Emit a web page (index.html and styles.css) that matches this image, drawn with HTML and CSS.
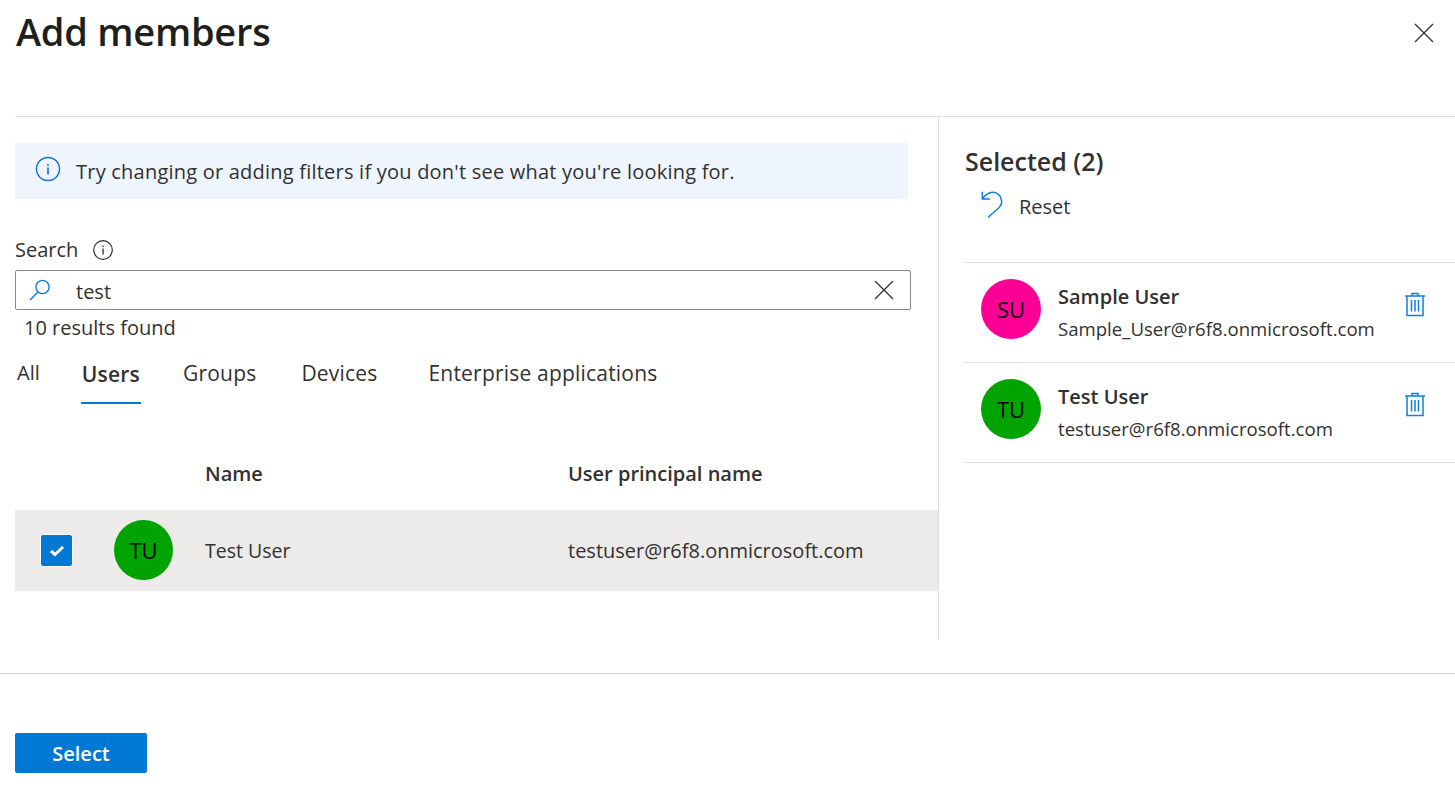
FILE: index.html
```html
<!DOCTYPE html>
<html lang="en">
<head>
<meta charset="utf-8">
<title>Add members</title>
<link rel="stylesheet" href="styles.css">
</head>
<body>
<div class="page">
  <header class="header">
    <h1 class="title">Add members</h1>
    <button class="close" aria-label="Close">
      <svg width="20" height="20" viewBox="0 0 20 20"><path d="M1 1l18 18M19 1L1 19" stroke="#323130" stroke-width="1.3" fill="none"/></svg>
    </button>
  </header>
  <main class="body">
    <section class="left">
      <div class="banner">
        <svg class="banner-icon" width="26" height="26" viewBox="0 0 26 26"><circle cx="13" cy="13" r="11.5" fill="none" stroke="#0f6cdc" stroke-width="1.4"/><rect x="12.2" y="11.5" width="1.6" height="7" fill="#0f6cdc"/><rect x="12.2" y="8" width="1.6" height="1.8" fill="#0f6cdc"/></svg>
        <span>Try changing or adding filters if you don't see what you're looking for.</span>
      </div>
      <div class="search-label">
        <span>Search</span>
        <svg width="22" height="22" viewBox="0 0 22 22"><circle cx="11" cy="11" r="9.3" fill="none" stroke="#323130" stroke-width="1.2"/><rect x="10.4" y="9.5" width="1.3" height="6" fill="#323130"/><rect x="10.4" y="6.5" width="1.3" height="1.6" fill="#323130"/></svg>
      </div>
      <div class="search-box">
        <svg class="search-icon" width="24" height="24" viewBox="0 0 24 24"><circle cx="14.5" cy="9" r="6.6" fill="none" stroke="#0f7fdc" stroke-width="1.4"/><path d="M10 14L2 22" stroke="#0f7fdc" stroke-width="1.4" fill="none"/></svg>
        <span class="search-text">test</span>
        <svg class="search-clear" width="20" height="20" viewBox="0 0 20 20"><path d="M1 1l18 18M19 1L1 19" stroke="#323130" stroke-width="1.3" fill="none"/></svg>
      </div>
      <div class="results">10 results found</div>
      <nav class="tabs">
        <span class="tab tab-all">All</span>
        <span class="tab tab-users">Users</span>
        <span class="tab tab-groups">Groups</span>
        <span class="tab tab-devices">Devices</span>
        <span class="tab">Enterprise applications</span>
      </nav>
      <div class="table-head">
        <span class="col-name">Name</span>
        <span class="col-upn">User principal name</span>
      </div>
      <div class="table-row">
        <span class="checkbox">
          <svg width="16" height="13" viewBox="0 0 16 13"><path d="M2 7l4 3.500L14 3" stroke="#fff" stroke-width="3" fill="none"/></svg>
        </span>
        <span class="avatar avatar-green">TU</span>
        <span class="col-name-cell">Test User</span>
        <span class="col-upn-cell">testuser@r6f8.onmicrosoft.com</span>
      </div>
    </section>
    <aside class="right">
      <h2 class="selected-title">Selected (2)</h2>
      <div class="reset">
        <svg width="24" height="30" viewBox="0 0 24 30"><path d="M2.300 .7V8H10M2.300 8C4.500 5 7 2.300 11 1.500c5-.8 9.500 2 10.500 7.500.7 3.500-1 6.500-3.500 8.500L8 26.500" fill="none" stroke="#0f7fdc" stroke-width="1.500"/></svg>
        <span>Reset</span>
      </div>
      <ul class="selected-list">
        <li class="selected-item">
          <span class="avatar avatar-pink">SU</span>
          <div class="selected-info">
            <div class="selected-name">Sample User</div>
            <div class="selected-mail">Sample_User@r6f8.onmicrosoft.com</div>
          </div>
          <svg class="trash" width="22" height="28" viewBox="0 0 22 28"><path d="M1 5h20M8 5V2.500h6V5M3 5v19.500h16V5M7.500 9v11.500M11 9v11.500M14.500 9v11.500" fill="none" stroke="#0f7fdc" stroke-width="1.500"/></svg>
        </li>
        <li class="selected-item">
          <span class="avatar avatar-green">TU</span>
          <div class="selected-info">
            <div class="selected-name">Test User</div>
            <div class="selected-mail">testuser@r6f8.onmicrosoft.com</div>
          </div>
          <svg class="trash" width="22" height="28" viewBox="0 0 22 28"><path d="M1 5h20M8 5V2.500h6V5M3 5v19.500h16V5M7.500 9v11.500M11 9v11.500M14.500 9v11.500" fill="none" stroke="#0f7fdc" stroke-width="1.500"/></svg>
        </li>
      </ul>
    </aside>
  </main>
  <footer class="footer">
    <button class="select-btn">Select</button>
  </footer>
</div>
</body>
</html>
```
FILE: styles.css
```css
* { box-sizing: border-box; }
html, body { margin: 0; padding: 0; }
body {
  font-family: "Open Sans", "Noto Sans", "Liberation Sans", sans-serif;
  color: #323130;
  background: #fff;
  font-size: 20px;
  overflow: hidden;
}
.page { width: 1455px; height: 796px; }
.header {
  height: 117px;
  margin-left: 15px;
  border-bottom: 1px solid #e1dfdd;
  display: flex;
  justify-content: space-between;
  align-items: flex-start;
}
.title {
  margin: 8px 0 0 1px;
  font-size: 38px;
  line-height: 46px;
  font-weight: 600;
  color: #201f1e;
  letter-spacing: -0.25px;
}
.close {
  border: 0;
  background: none;
  padding: 0;
  margin: 23px 21px 0 0;
  width: 20px;
  height: 20px;
}
.body { display: flex; height: 523px; }
.left {
  width: 939px;
  padding: 26px 0 0 15px;
  border-right: 1px solid #e1dfdd;
}
.banner {
  width: 893px;
  height: 56px;
  background: #eef5fe;
  display: flex;
  align-items: center;
  padding-left: 20px;
  gap: 15px;
  font-size: 20px;
  letter-spacing: 0.22px;
}
.banner-icon { flex: none; margin-top: -4px; }
.search-label {
  margin-top: 37px;
  height: 27px;
  display: flex;
  align-items: center;
  gap: 14px;
}
.search-box {
  margin-top: 7px;
  width: 896px;
  height: 40px;
  border: 1px solid #8a8886;
  border-radius: 2px;
  display: flex;
  align-items: center;
  padding: 0 16px 0 12px;
}
.search-icon { flex: none; }
.search-text { margin: 2px 0 0 24px; flex: 1; }
.search-clear { flex: none; }
.results { margin: 3px 0 0 9px; line-height: 30px; }
.tabs {
  display: flex;
  margin-top: 13px;
  height: 48px;
  font-size: 21px;
  letter-spacing: 0.2px;
}
.tab { line-height: 34px; padding: 0 2px; }
.tab-all { margin-right: 39px; font-size: 20px; letter-spacing: 0; }
.tab-users {
  font-weight: 600;
  margin-right: 40px;
  height: 48px;
  border-bottom: 2px solid #0078d4;
  padding: 1px 1px 0;
}
.tab-groups { margin-right: 41px; }
.tab-devices { margin-right: 47px; }
.table-head {
  display: flex;
  margin-top: 51px;
  height: 55px;
  font-weight: 600;
  color: #323130;
  line-height: 38px;
}
.col-name { margin-left: 190px; width: 363px; }
.table-row {
  width: 923px;
  height: 81px;
  padding-bottom: 1px;
  background: #edebe9;
  display: flex;
  align-items: center;
}
.checkbox {
  width: 33px;
  height: 33px;
  margin-left: 25px;
  background: #0078d4;
  border: 1px solid #fff;
  border-radius: 3px;
  display: flex;
  align-items: center;
  justify-content: center;
  flex: none;
}
.avatar {
  width: 60px;
  height: 60px;
  border-radius: 50%;
  display: flex;
  align-items: center;
  justify-content: center;
  color: #000;
  font-size: 22px;
  flex: none;
}
.avatar-green { background: #00a300; }
.avatar-pink { background: #ff0097; }
.table-row .avatar { margin-left: 41px; width: 59px; }
.col-name-cell {
  margin-left: 32px;
  width: 363px;
  flex: none;
  font-size: 19.500px;
}
.right { flex: 1; padding: 26px 0 0 26px; }
.selected-title {
  margin: 0;
  font-size: 25px;
  line-height: 36px;
  font-weight: 600;
  color: #323130;
}
.reset {
  display: flex;
  align-items: center;
  height: 30px;
  margin: 12px 0 0 15px;
  gap: 15px;
}
.selected-list { list-style: none; margin: 41px 0 0; padding: 0; border-top: 1px solid #e1dfdd; }
.selected-item {
  height: 100px;
  border-bottom: 1px solid #e1dfdd;
  display: flex;
  align-items: center;
  padding-left: 16px;
}
.selected-item .avatar { margin-top: -8px; }
.selected-info { margin-left: 17px; flex: 1; }
.selected-name { font-weight: 600; line-height: 32px; }
.selected-mail { line-height: 32px; font-size: 18.600px; }
.trash { flex: none; margin: -16px 29px 0 0; }
.footer {
  margin-top: 33px;
  border-top: 1px solid #d2d0ce;
  padding: 59px 0 0 15px;
}
.select-btn {
  width: 132px;
  height: 40px;
  background: #0078d4;
  color: #fff;
  border: 0;
  border-radius: 2px;
  font: 600 20px "Open Sans", "Noto Sans", sans-serif;
}
```
